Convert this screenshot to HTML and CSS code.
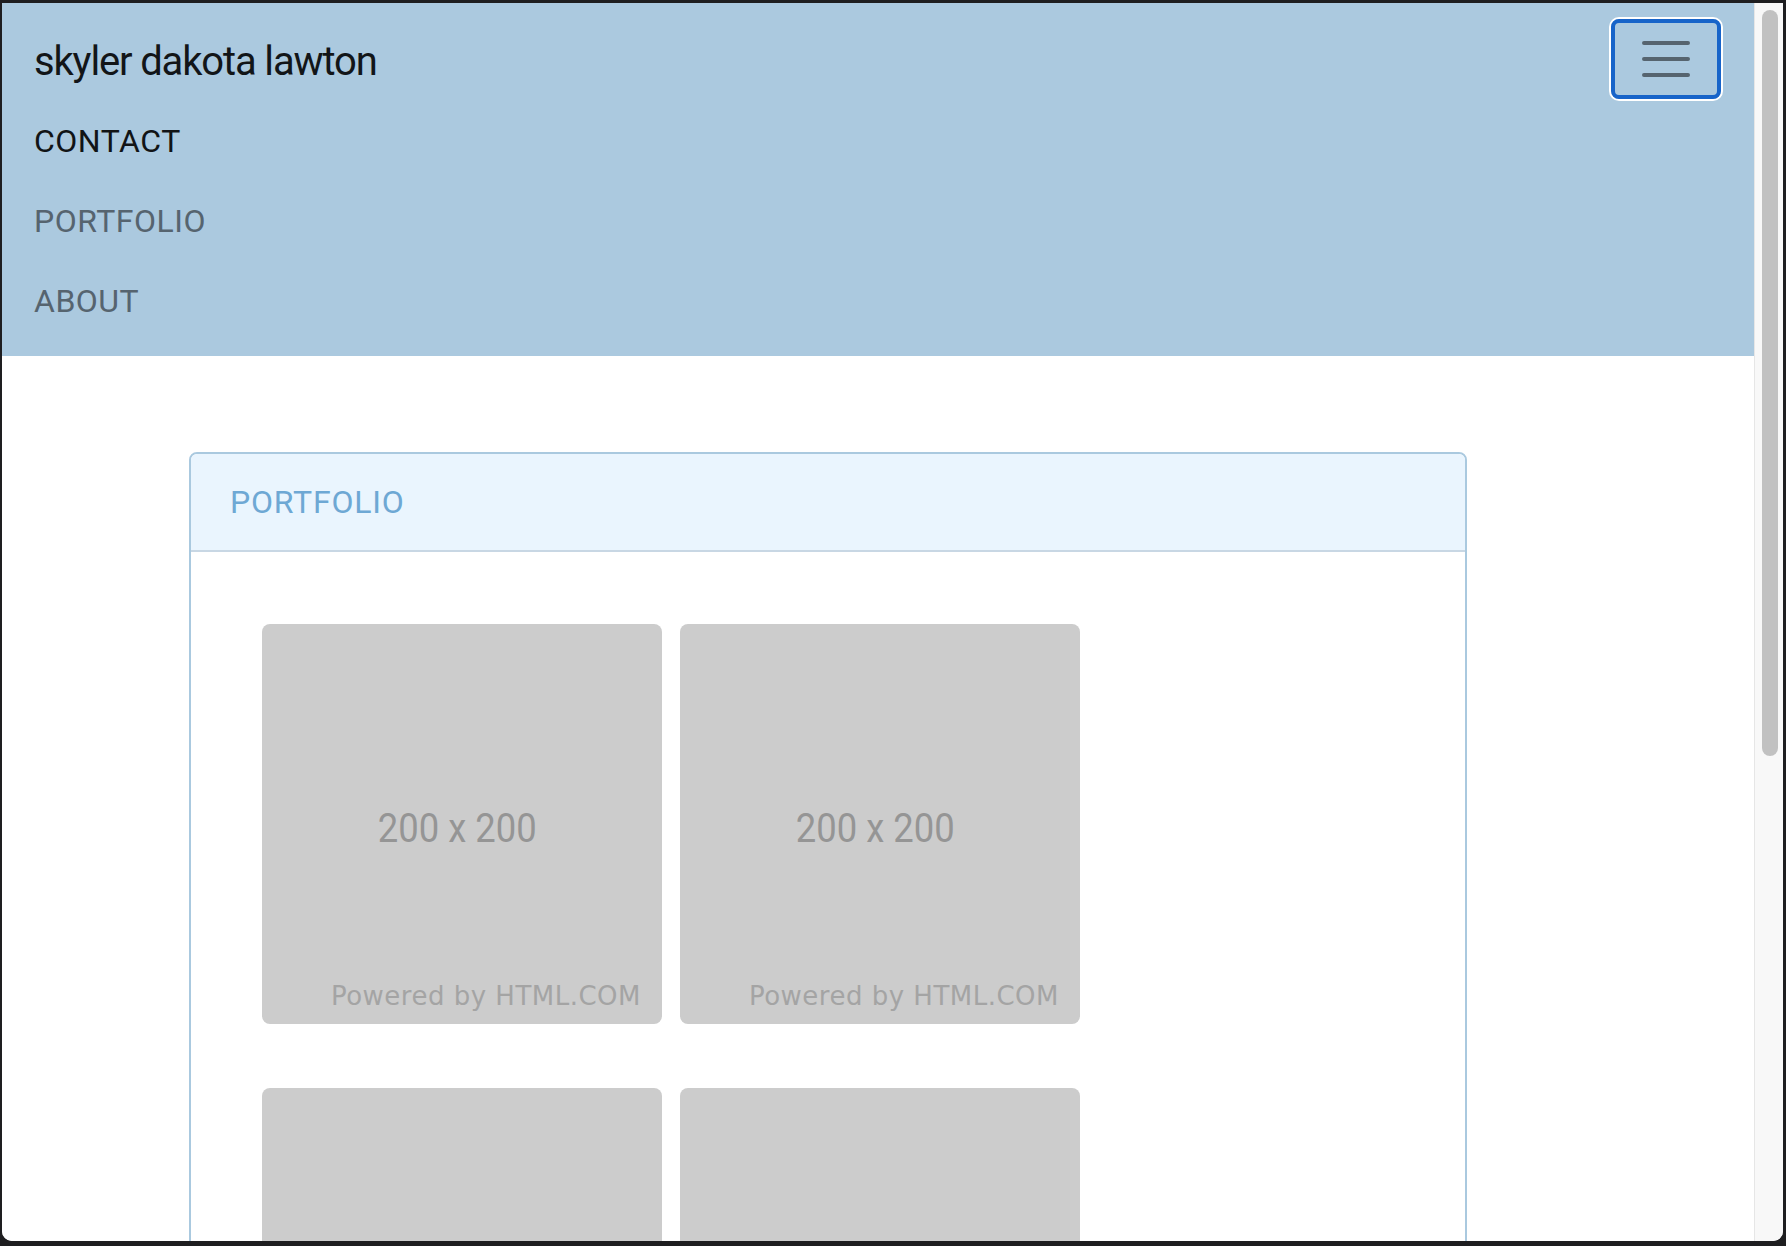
FILE: index.html
```html
<!DOCTYPE html>
<html lang="en">
<head>
<meta charset="utf-8">
<title>skyler dakota lawton</title>
<link rel="stylesheet" href="styles.css">
</head>
<body>
<div class="window">
  <div class="viewport">
    <nav class="navbar">
      <div class="navbar-top">
        <a class="brand" href="#">skyler dakota lawton</a>
        <button class="toggler" type="button" aria-label="Toggle navigation">
          <svg class="toggler-icon" width="60" height="60" viewBox="0 0 30 30" aria-hidden="true">
            <path d="M4 7h22M4 15h22M4 23h22" stroke="#56646f" stroke-width="2" stroke-linecap="round" fill="none"/>
          </svg>
        </button>
      </div>
      <ul class="nav-list">
        <li><a class="nav-link active" href="#">CONTACT</a></li>
        <li><a class="nav-link" href="#">PORTFOLIO</a></li>
        <li><a class="nav-link" href="#">ABOUT</a></li>
      </ul>
    </nav>
    <main class="main">
      <section class="card">
        <header class="card-header">PORTFOLIO</header>
        <div class="card-body">
          <div class="gallery">
            <div class="placeholder"><span class="ph-size">200 x 200</span><span class="ph-credit">Powered by HTML.COM</span></div>
            <div class="placeholder"><span class="ph-size">200 x 200</span><span class="ph-credit">Powered by HTML.COM</span></div>
            <div class="placeholder"><span class="ph-size">200 x 200</span><span class="ph-credit">Powered by HTML.COM</span></div>
            <div class="placeholder"><span class="ph-size">200 x 200</span><span class="ph-credit">Powered by HTML.COM</span></div>
          </div>
        </div>
      </section>
    </main>
  </div>
  <div class="scrollbar"><div class="scroll-thumb"></div></div>
</div>
</body>
</html>
```
FILE: styles.css
```css
html, body {
  margin: 0;
  padding: 0;
  height: 1246px;
  overflow: hidden;
  background: #1e1e20;
}

.window {
  margin: 3px 3px 5px 2px;
  height: 1238px;
  display: flex;
  background: #ffffff;
  border-radius: 0 0 10px 10px;
  overflow: hidden;
}

.viewport {
  flex: 1;
  min-width: 0;
  overflow: hidden;
  background: #ffffff;
  font-family: Roboto, "Liberation Sans", Arial, sans-serif;
}

.scrollbar {
  width: 29px;
  box-sizing: border-box;
  border-left: 1px solid #e6e6e6;
  background: #f8f8f8;
  padding: 7px 5px 0 7px;
}

.scroll-thumb {
  width: 16px;
  height: 746px;
  border-radius: 8px;
  background: #c1c1c1;
}

/* navbar */
.navbar {
  background: #abc9df;
  padding: 16px 32px 17px;
}

.navbar-top {
  display: flex;
  align-items: center;
  justify-content: space-between;
  height: 80px;
}

.brand {
  font-size: 40px;
  line-height: 60px;
  padding: 13px 0 7px;
  color: #121518;
  text-decoration: none;
  letter-spacing: -1.15px;
}

.toggler {
  width: 110px;
  height: 80px;
  box-sizing: border-box;
  border: 4px solid #1764c9;
  border-radius: 8px;
  box-shadow: 0 0 0 2px #ffffff;
  background: transparent;
  padding: 0;
  margin-right: 1px;
  display: flex;
  align-items: center;
  justify-content: center;
}

.toggler-icon {
  display: block;
}

.nav-list {
  list-style: none;
  margin: 0;
  padding: 0;
}

.nav-link {
  display: block;
  font-size: 32px;
  line-height: 48px;
  padding: 18px 0 14px;
  color: #56646f;
  text-decoration: none;
  letter-spacing: 0.5px;
}

.nav-link.active {
  color: #111416;
}

/* content */
.main {
  padding: 96px 0 0 187px;
}

.card {
  width: 1278px;
  box-sizing: border-box;
  height: 1000px;
  border: 2px solid #aac9df;
  border-radius: 8px;
  overflow: hidden;
}

.card-header {
  background: #eaf5fe;
  border-bottom: 2px solid #c8d7e4;
  padding: 24px 39px;
  font-size: 32px;
  line-height: 48px;
  color: #6ea8d4;
  letter-spacing: 0.8px;
}

.card-body {
  padding: 72px 71px 71px;
}

.gallery {
  display: flex;
  flex-wrap: wrap;
  width: 818px;
  column-gap: 18px;
  row-gap: 64px;
}

.placeholder {
  position: relative;
  width: 400px;
  height: 400px;
  border-radius: 8px;
  background: #cccccc;
  display: flex;
  align-items: center;
  justify-content: center;
}

.ph-size {
  display: inline-block;
  font-family: Roboto, "Liberation Sans", Arial, sans-serif;
  font-size: 40px;
  color: #959595;
  transform: scaleX(0.91);
  margin: 0 10px 0 0;
  position: relative;
  top: 4px;
}

.ph-credit {
  position: absolute;
  right: 21px;
  bottom: 13px;
  font-family: "DejaVu Sans", Verdana, sans-serif;
  font-size: 26px;
  line-height: 30px;
  color: #a4a4a4;
  letter-spacing: 0.5px;
}
```
